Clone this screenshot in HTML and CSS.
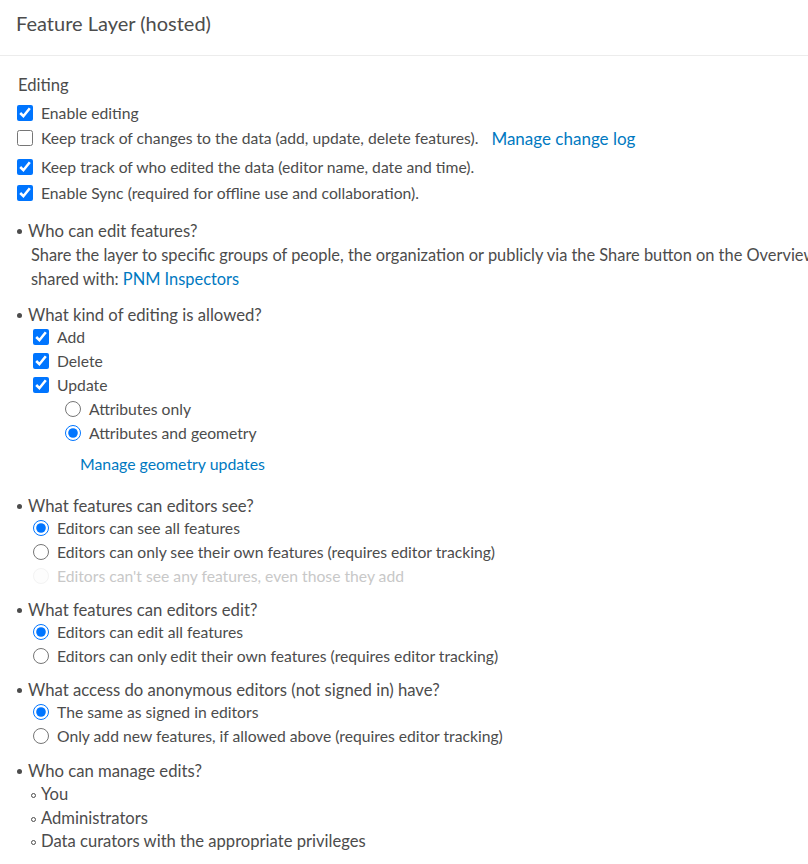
FILE: index.html
```html
<!DOCTYPE html>
<html lang="en">
<head>
<meta charset="utf-8">
<title>Feature Layer (hosted)</title>
<link rel="stylesheet" href="styles.css">
</head>
<body>
<header class="title">Feature Layer (hosted)</header>
<main class="content">
  <h3 class="section-title">Editing</h3>
  <label class="opt r1"><input type="checkbox" checked><span>Enable editing</span></label>
  <label class="opt r2"><input type="checkbox"><span>Keep track of changes to the data (add, update, delete features).</span><a class="link log" href="#">Manage change log</a></label>
  <label class="opt r3"><input type="checkbox" checked><span>Keep track of who edited the data (editor name, date and time).</span></label>
  <label class="opt r4"><input type="checkbox" checked><span>Enable Sync (required for offline use and collaboration).</span></label>

  <ul class="questions">
    <li class="q q1">
      <div class="q-text">Who can edit features?</div>
      <p class="desc">Share the layer to specific groups of people, the organization or publicly via the Share button on the Overview page.</p>
      <p class="desc">shared with: <a class="link" href="#">PNM Inspectors</a></p>
    </li>
    <li class="q q2">
      <div class="q-text">What kind of editing is allowed?</div>
      <div class="opts">
        <label class="opt"><input type="checkbox" checked><span>Add</span></label>
        <label class="opt"><input type="checkbox" checked><span>Delete</span></label>
        <label class="opt"><input type="checkbox" checked><span>Update</span></label>
        <div class="sub">
          <label class="opt"><input type="radio" name="upd"><span>Attributes only</span></label>
          <label class="opt"><input type="radio" name="upd" checked><span>Attributes and geometry</span></label>
          <a class="link geo" href="#">Manage geometry updates</a>
        </div>
      </div>
    </li>
    <li class="q q3">
      <div class="q-text">What features can editors see?</div>
      <div class="opts">
        <label class="opt"><input type="radio" name="see" checked><span>Editors can see all features</span></label>
        <label class="opt"><input type="radio" name="see"><span>Editors can only see their own features (requires editor tracking)</span></label>
        <label class="opt disabled"><input type="radio" name="see" disabled><span>Editors can't see any features, even those they add</span></label>
      </div>
    </li>
    <li class="q q4">
      <div class="q-text">What features can editors edit?</div>
      <div class="opts">
        <label class="opt"><input type="radio" name="edit" checked><span>Editors can edit all features</span></label>
        <label class="opt"><input type="radio" name="edit"><span>Editors can only edit their own features (requires editor tracking)</span></label>
      </div>
    </li>
    <li class="q q5">
      <div class="q-text">What access do anonymous editors (not signed in) have?</div>
      <div class="opts">
        <label class="opt"><input type="radio" name="anon" checked><span>The same as signed in editors</span></label>
        <label class="opt"><input type="radio" name="anon"><span>Only add new features, if allowed above (requires editor tracking)</span></label>
      </div>
    </li>
    <li class="q q6">
      <div class="q-text">Who can manage edits?</div>
      <ul class="managers">
        <li>You</li>
        <li>Administrators</li>
        <li>Data curators with the appropriate privileges</li>
      </ul>
    </li>
  </ul>
</main>
</body>
</html>
```
FILE: styles.css
```css
html, body {
  margin: 0;
  padding: 0;
  background: #fff;
}
body {
  width: 808px;
  height: 864px;
  overflow: hidden;
  font-family: "Lato", "Open Sans", sans-serif;
  font-size: 15.7px;
  color: #4c4c4c;
  white-space: nowrap;
}
.title {
  height: 56px;
  line-height: 46px;
  padding-left: 16px;
  font-size: 20px;
  border-bottom: 1px solid #ececec;
  box-sizing: border-box;
}
.content {
  padding: 17px 0 0 17px;
}
.section-title {
  margin: 0 0 4px 1px;
  font-size: 16.6px;
  font-weight: 400;
  line-height: 24px;
}
.opt {
  display: flex;
  align-items: center;
  height: 24px;
  font-size: 15.7px;
}
.opt input {
  width: 16px;
  height: 16px;
  margin: 0 8px 0 0;
  flex: none;
  accent-color: #0075ff;
}
.r2 { margin-top: 1px; }
.r3 { margin-top: 5px; }
.r4 { margin-top: 2px; }
.link {
  color: #0079c1;
  text-decoration: none;
}
.log {
  margin-left: 13px;
  font-size: 17px;
}

.questions {
  list-style: none;
  margin: 14px 0 0 0;
  padding: 0;
}
.q1 { margin-top: 0; }
.q2 { margin-top: 12px; }
.q3 { margin-top: 18px; }
.q4, .q5 { margin-top: 10px; }
.q6 { margin-top: 11px; }
.q-text {
  position: relative;
  line-height: 24px;
  padding-left: 11px;
  font-size: 16.7px;
}
.q-text::before {
  content: "";
  position: absolute;
  left: 0;
  top: 10px;
  width: 5px;
  height: 5px;
  border-radius: 50%;
  background: #4c4c4c;
}
.desc {
  margin: 0 0 0 14px;
  line-height: 24px;
  font-size: 16.4px;
}
.opts {
  margin: -2px 0 0 16px;
}
.sub {
  margin-left: 32px;
}
.geo {
  display: block;
  margin: 7px 0 0 15px;
  line-height: 24px;
  font-size: 15.85px;
}
.disabled {
  color: #c8c8c8;
}
.disabled input {
  opacity: 0.25;
}
.managers {
  list-style: none;
  margin: 0 0 0 14px;
  padding: 0;
  font-size: 16.6px;
}
.managers li {
  position: relative;
  line-height: 23.5px;
  padding-left: 10px;
}
.managers li::before {
  content: "";
  position: absolute;
  left: 0;
  top: 10px;
  width: 3px;
  height: 3px;
  border: 1px solid #4c4c4c;
  border-radius: 50%;
}
```
